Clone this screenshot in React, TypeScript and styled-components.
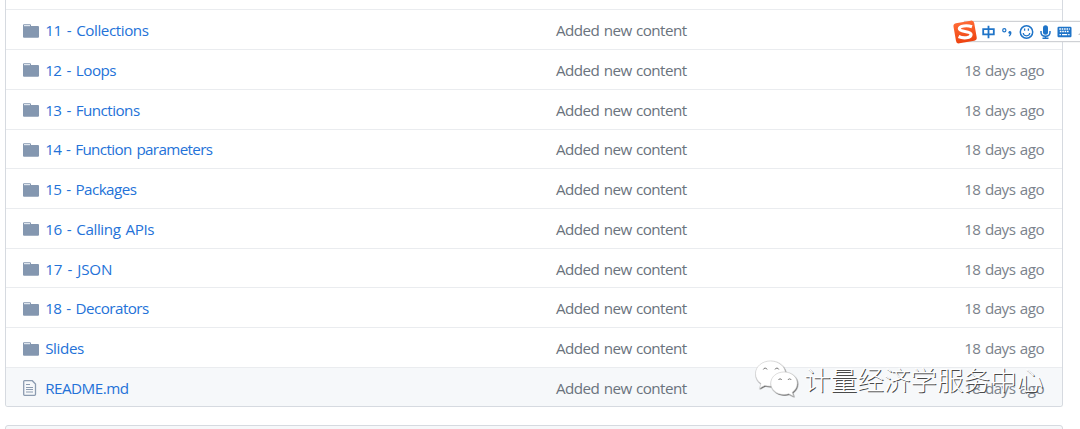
import React from 'react';
import styled, { createGlobalStyle } from 'styled-components';

const GlobalStyle = createGlobalStyle`
  body {
    margin: 0;
    background: #fff;
    overflow: hidden;
    font-family: "Open Sans", "Noto Sans", sans-serif;
  }
`;

const Page = styled.div`
  position: relative;
  box-sizing: border-box;
  height: 429px;
  padding: 0 17px 0 5px;
  overflow: hidden;
`;

const FileTable = styled.div`
  box-sizing: border-box;
  height: 407px;
  padding-top: 9.4px;
  border: 1px solid #d6dae0;
  border-top: 0;
  border-radius: 0 0 3px 3px;
  overflow: hidden;
`;

const FileRow = styled.div<{ $active?: boolean }>`
  display: flex;
  align-items: center;
  box-sizing: border-box;
  height: 39.72px;
  padding: 1px 18px 0 17px;
  border-top: 1px solid #eaecef;
  background: ${props => props.$active ? '#f6f8fa' : '#fff'};
  font-size: 15.2px;
  line-height: 22px;
  white-space: nowrap;
`;

const IconCell = styled.span`
  display: flex;
  width: 22.2px;
  padding-top: 1px;

  svg {
    display: block;
  }
`;

const FileName = styled.a<{ $tracking: number }>`
  width: 510.8px;
  color: #2472d8;
  letter-spacing: ${props => props.$tracking}px;
  word-spacing: 1.5px;
`;

const CommitMessage = styled.span`
  flex: 1;
  color: #6a737d;
  letter-spacing: -0.55px;
  word-spacing: 1px;
`;

const Age = styled.span`
  color: #7b838c;
  letter-spacing: -0.53px;
  word-spacing: 1px;
`;

const ReadmeBox = styled.div`
  box-sizing: border-box;
  height: 20px;
  margin-top: 18px;
  border: 1px solid #d6dae0;
  border-radius: 3px;
  background: #f6f8fa;
`;

const InputBar = styled.div`
  position: absolute;
  top: 21px;
  left: 952px;
  display: flex;
  align-items: center;
  box-sizing: border-box;
  width: 140px;
  height: 21px;

  svg {
    display: block;
  }
`;

const InputBarTrack = styled.div`
  position: absolute;
  inset: 0 0 0 12px;
  box-sizing: border-box;
  border: 1px solid #cfd1d5;
  background: #fff;
  box-shadow: 0 0 1px #c4c6ca;
`;

const InputBarIcons = styled.div`
  position: relative;
`;

const Watermark = styled.div`
  position: absolute;
  top: 358px;
  left: 753px;
  display: flex;
  align-items: center;
  height: 42px;
  color: #fff;
`;

const WatermarkText = styled.span`
  margin-left: 5px;
  font-family: "Noto Sans CJK SC", sans-serif;
  font-size: 26.6px;
  font-weight: 300;
  line-height: 40px;
  white-space: nowrap;
  text-shadow: 1px 1px 0.5px #4a4a4a;
`;

interface FileEntry {
  name: string;
  kind: 'folder' | 'file';
  tracking: number;
}

const entries: FileEntry[] = [
  { name: '11 - Collections', kind: 'folder', tracking: -0.43 },
  { name: '12 - Loops', kind: 'folder', tracking: -0.5 },
  { name: '13 - Functions', kind: 'folder', tracking: -0.53 },
  { name: '14 - Function parameters', kind: 'folder', tracking: -0.63 },
  { name: '15 - Packages', kind: 'folder', tracking: -0.56 },
  { name: '16 - Calling APIs', kind: 'folder', tracking: -0.41 },
  { name: '17 - JSON', kind: 'folder', tracking: -0.2 },
  { name: '18 - Decorators', kind: 'folder', tracking: -0.55 },
  { name: 'Slides', kind: 'folder', tracking: -0.4 },
  { name: 'README.md', kind: 'file', tracking: -0.5 },
];

const FolderIcon = () => (
  <svg width="16" height="14" viewBox="0 0 16 14">
    <path d="M1 .3h6a1 1 0 0 1 1 1V2h7a1 1 0 0 1 1 1v9.700a1 1 0 0 1-1 1H1a1 1 0 0 1-1-1V1.300a1 1 0 0 1 1-1z" fill="#8497b0" />
    <path d="M1 1h6v1.200H1z" fill="#dfe6ee" />
  </svg>
);

const FileIcon = () => (
  <svg width="14" height="16" viewBox="0 0 14 16" fill="none" stroke="#8b9bb0">
    <path d="M1.500.7h7.800l3.200 3.400v10.200a1 1 0 0 1-1 1h-10a.8.8 0 0 1-.8-.8v-13a.8.8 0 0 1 .8-.8z" strokeWidth="1.3" />
    <path d="M3 4.500h4M3 7.500h7M3 9.500h7M3 12h7" strokeWidth="1.2" />
  </svg>
);

const InputIcons = () => (
  <svg width="130" height="26" viewBox="0 0 130 26">
    <defs>
      <linearGradient id="badge" x1="0" y1="0" x2="0" y2="1">
        <stop offset="0" stopColor="#ff6a35" />
        <stop offset="1" stopColor="#ed4310" />
      </linearGradient>
    </defs>
    <rect x="2.6" y="2.8" width="21" height="20.4" rx="3" fill="url(#badge)" transform="rotate(-10 13 13)" />
    <path d="M20 7.700C15 6 7.300 6.700 7.300 9.800c0 3.400 11.800 1.800 11.800 5.700 0 3.700-8 4.200-12.500 2" fill="none" stroke="#fff" strokeWidth="3.1" />
    <g fill="none" stroke="#1f74c8">
      <path d="M31.200 10.200h10.600v5.100H31.200zM36.500 6.700v12.600" strokeWidth="1.8" />
      <circle cx="52.3" cy="11.2" r="1.6" strokeWidth="1.2" />
      <circle cx="74.5" cy="13" r="6.2" strokeWidth="1.5" />
      <path d="M71.200 14c.5 3.700 6.100 3.700 6.600 0" strokeWidth="1.2" />
      <path d="M72.600 9.600v2.200M76.400 9.600v2.200" strokeWidth="1.3" />
      <path d="M89 12v1.300c0 5.400 9 5.400 9 0V12M93.500 17v2.200M90.500 19.200h6" strokeWidth="1.5" />
    </g>
    <g fill="#1f74c8">
      <path d="M57.100 12.200c2.700-1 3.500 3.300.2 5.400l-.7-.7c.9-.7 1.200-1.400 1.100-2.100-1.600 0-1.900-2-.6-2.600z" />
      <rect x="91" y="6.3" width="5" height="9.5" rx="2.5" />
      <rect x="105.5" y="7.7" width="14" height="10.5" rx="1.2" />
    </g>
    <path d="M107.300 10h10.500M107.800 12.500h9.500" stroke="#fff" strokeWidth="1.3" strokeDasharray="1.6 0.8" />
    <path d="M107.500 15.600h1.400M110 15.600h5.200M116.200 15.600h1.400" stroke="#fff" strokeWidth="1.3" />
    <path d="M126 16l3-3v3z" fill="#c5c7cc" />
  </svg>
);

const BubblesIcon = () => (
  <svg width="46" height="42" viewBox="0 0 46 42">
    <defs>
      <filter id="bubbleShadow" x="-10%" y="-10%" width="125%" height="125%">
        <feDropShadow dx="0.6" dy="0.8" stdDeviation="0.5" floodColor="#444" floodOpacity="1" />
      </filter>
    </defs>
    <g fill="#fff" stroke="#c4c4c4" strokeWidth="0.5">
      <path filter="url(#bubbleShadow)" d="M17.500 3C9 3 2.500 8.600 2.500 15.700c0 4.100 2.100 7.500 5.500 9.800l-1.500 4.800 5.300-2.900c1.900.5 3.800.8 6 .8 8.200 0 14.700-5.500 14.700-12.500S25.800 3 17.500 3z" />
      <path
        filter="url(#bubbleShadow)"
        d="M31 14c-7.400 0-13.200 4.900-13.200 11.200S23.600 36.500 31 36.500c1.700 0 3.300-.2 4.800-.7l4.700 2.500-1.300-4c3.100-2.100 5-5.400 5-9.100C44.200 18.900 38.400 14 31 14z"
      />
    </g>
    <g fill="none" stroke="#777" strokeWidth="1">
      <path d="M10.300 11.500a2 2 0 0 1 3.800 0M22 11.500a2 2 0 0 1 3.800 0M25.500 22a1.700 1.700 0 0 1 3.200 0M35 22a1.700 1.700 0 0 1 3.200 0" />
    </g>
  </svg>
);

const App: React.FC = () => {
  return (
    <>
      <GlobalStyle />
      <Page>
        <FileTable>
          {entries.map(entry => (
            <FileRow key={entry.name} $active={entry.kind === 'file'}>
              <IconCell>{entry.kind === 'file' ? <FileIcon /> : <FolderIcon />}</IconCell>
              <FileName $tracking={entry.tracking}>{entry.name}</FileName>
              <CommitMessage>Added new content</CommitMessage>
              <Age>18 days ago</Age>
            </FileRow>
          ))}
        </FileTable>
        <ReadmeBox />

        <InputBar>
          <InputBarTrack />
          <InputBarIcons>
            <InputIcons />
          </InputBarIcons>
        </InputBar>

        <Watermark>
          <BubblesIcon />
          <WatermarkText>计量经济学服务中心</WatermarkText>
        </Watermark>
      </Page>
    </>
  );
};

export default App;
